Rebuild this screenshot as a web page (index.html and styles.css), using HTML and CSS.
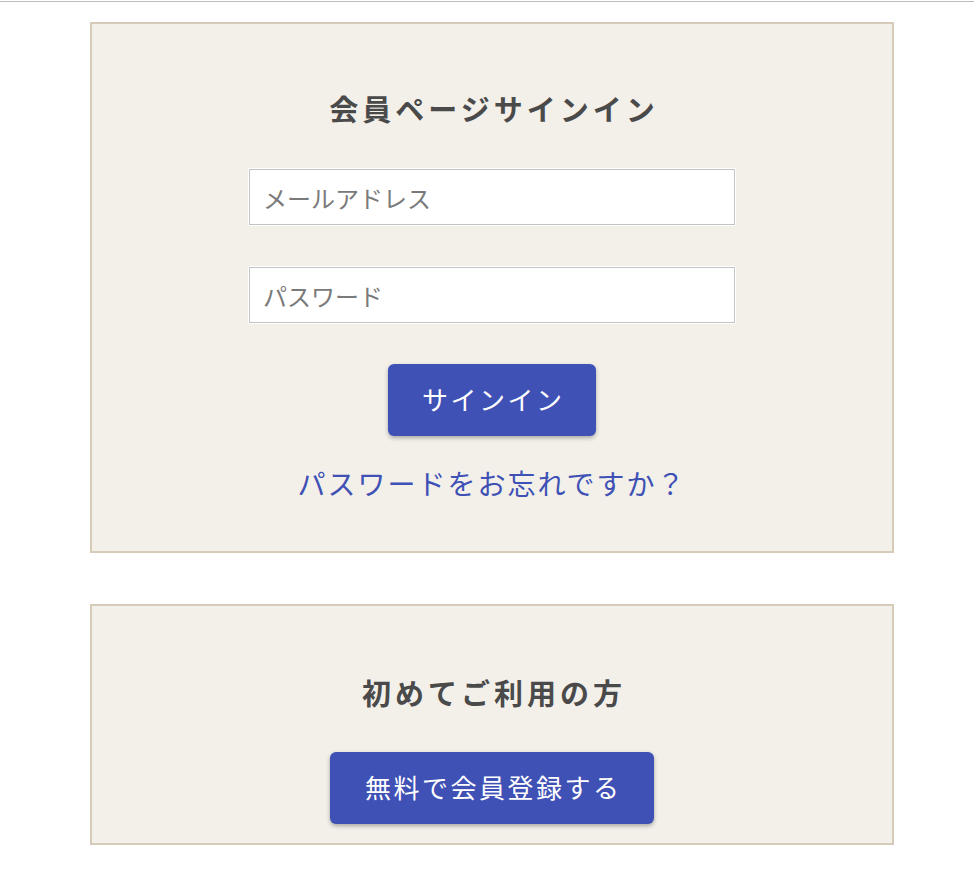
FILE: index.html
```html
<!DOCTYPE html>
<html lang="ja">
<head>
<meta charset="utf-8">
<title>会員ページサインイン</title>
<link rel="stylesheet" href="styles.css">
</head>
<body>
<div class="topbar"></div>
<main class="main">
  <section class="panel panel-signin">
    <h1 class="panel-title">会員ページサインイン</h1>
    <form class="signin-form">
      <input class="field" type="email" placeholder="メールアドレス">
      <input class="field" type="password" placeholder="パスワード">
      <button class="btn btn-signin" type="button">サインイン</button>
      <a class="forgot-link" href="#">パスワードをお忘れですか？</a>
    </form>
  </section>
  <section class="panel panel-register">
    <h2 class="panel-title">初めてご利用の方</h2>
    <button class="btn btn-register" type="button">無料で会員登録する</button>
  </section>
</main>
</body>
</html>
```

FILE: styles.css
```css
html, body {
  margin: 0;
  padding: 0;
  background: #ffffff;
}

body {
  font-family: "Noto Sans CJK JP", "Noto Sans", sans-serif;
  color: #4a4a4a;
}

.topbar {
  height: 1px;
  border-bottom: 1px solid #bdbdbd;
}

.main {
  margin-left: 90px;
  width: 804px;
  padding-top: 20px;
  display: flex;
  flex-direction: column;
  gap: 51px;
}

.panel {
  box-sizing: border-box;
  width: 804px;
  background: #f3f0ea;
  border: 2px solid #d6cbb9;
  display: flex;
  flex-direction: column;
  align-items: center;
}

.panel-signin {
  padding: 64px 0 48px;
}

.panel-register {
  padding: 66px 0 19px;
}

.panel-title {
  margin: 0;
  font-size: 29px;
  line-height: 40px;
  font-weight: 700;
  letter-spacing: 4px;
  text-indent: 4px;
  color: #4a4a4a;
}

.signin-form {
  margin-top: 41px;
  display: flex;
  flex-direction: column;
  align-items: center;
}

.field {
  box-sizing: border-box;
  width: 486px;
  height: 56px;
  margin: 0 0 42px;
  padding: 0 13px;
  border: 1px solid #c4c4c4;
  outline: 1px solid #ffffff;
  background: #ffffff;
  font-family: inherit;
  font-size: 24px;
  color: #333;
}

.field + .field {
  margin-bottom: 41px;
}

.field::placeholder {
  color: #7a7a7a;
}

.btn {
  box-sizing: border-box;
  height: 72px;
  padding: 0 0 4px;
  border: none;
  border-radius: 6px;
  background: #3f51b5;
  color: #ffffff;
  font-family: inherit;
  font-size: 26px;
  letter-spacing: 2.5px;
  text-indent: 2.5px;
  box-shadow: 0 2px 4px rgba(0, 0, 0, 0.3);
  cursor: pointer;
}

.btn-signin {
  width: 208px;
}

.btn-register {
  width: 324px;
  margin-top: 40px;
}

.forgot-link {
  margin-top: 27px;
  font-size: 28px;
  line-height: 40px;
  letter-spacing: 2px;
  color: #3f51b5;
  text-decoration: none;
}
```
